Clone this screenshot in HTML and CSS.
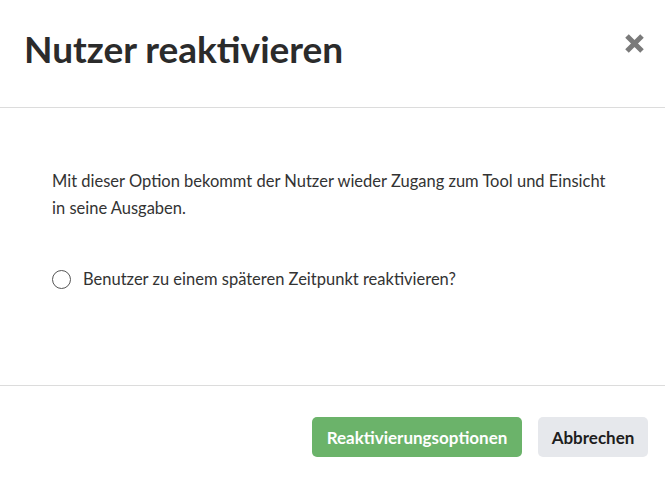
FILE: index.html
```html
<!DOCTYPE html>
<html lang="de">
<head>
<meta charset="utf-8">
<link rel="stylesheet" href="styles.css">
</head>
<body>
<div class="modal">
  <header class="modal-header">
    <h1 class="title">Nutzer reaktivieren</h1>
    <button class="close" aria-label="Schließen">
      <svg width="21" height="21" viewBox="0 0 21 21"><path d="M3 3L18 18M18 3L3 18" stroke="#7a7a7a" stroke-width="5" stroke-linecap="butt"/></svg>
    </button>
  </header>
  <section class="modal-body">
    <p class="desc">Mit dieser Option bekommt der Nutzer wieder Zugang zum Tool und Einsicht in seine Ausgaben.</p>
    <label class="check">
      <span class="box"></span>
      <span class="label-text">Benutzer zu einem späteren Zeitpunkt reaktivieren?</span>
    </label>
  </section>
  <footer class="modal-footer">
    <button class="btn btn-primary">Reaktivierungsoptionen</button>
    <button class="btn btn-secondary">Abbrechen</button>
  </footer>
</div>
</body>
</html>
```
FILE: styles.css
```css
html, body {
  margin: 0;
  padding: 0;
  background: #fff;
}
body {
  font-family: "Lato", "Open Sans", sans-serif;
  color: #2b2b2b;
  width: 665px;
  height: 482px;
  overflow: hidden;
}
.modal {
  display: flex;
  flex-direction: column;
}
.modal-header {
  height: 108px;
  box-sizing: border-box;
  border-bottom: 1px solid #dcdcdc;
  display: flex;
  align-items: flex-start;
  justify-content: space-between;
  padding: 24px 20px 0 24px;
}
.title {
  margin: 0;
  font-size: 37px;
  font-weight: 700;
  line-height: 50px;
  color: #2b2b2b;
}
.close {
  background: none;
  border: 0;
  padding: 0;
  margin-top: 9px;
  width: 21px;
  height: 21px;
  cursor: pointer;
}
.close svg { display: block; }
.modal-body {
  height: 278px;
  box-sizing: border-box;
  border-bottom: 1px solid #dcdcdc;
  padding: 60px 52px 0 52px;
}
.desc {
  margin: 0;
  font-size: 16.5px;
  line-height: 27px;
  max-width: 565px;
  color: #333;
}
.check {
  display: flex;
  align-items: center;
  gap: 12px;
  margin-top: 47px;
  font-size: 16.5px;
  color: #333;
}
.box {
  width: 17px;
  height: 17px;
  border: 1.5px solid #555;
  border-radius: 50%;
  flex: none;
}
.modal-footer {
  display: flex;
  justify-content: flex-end;
  gap: 16px;
  padding: 31px 17px 0 0;
}
.btn {
  font-family: inherit;
  font-size: 17px;
  font-weight: 700;
  height: 40px;
  border-radius: 5px;
  border: 0;
  padding: 0;
}
.btn-primary {
  background: #6bb36a;
  color: #fff;
  width: 210px;
}
.btn-secondary {
  background: #e6e8ec;
  color: #1e1e1e;
  width: 110px;
}
```
